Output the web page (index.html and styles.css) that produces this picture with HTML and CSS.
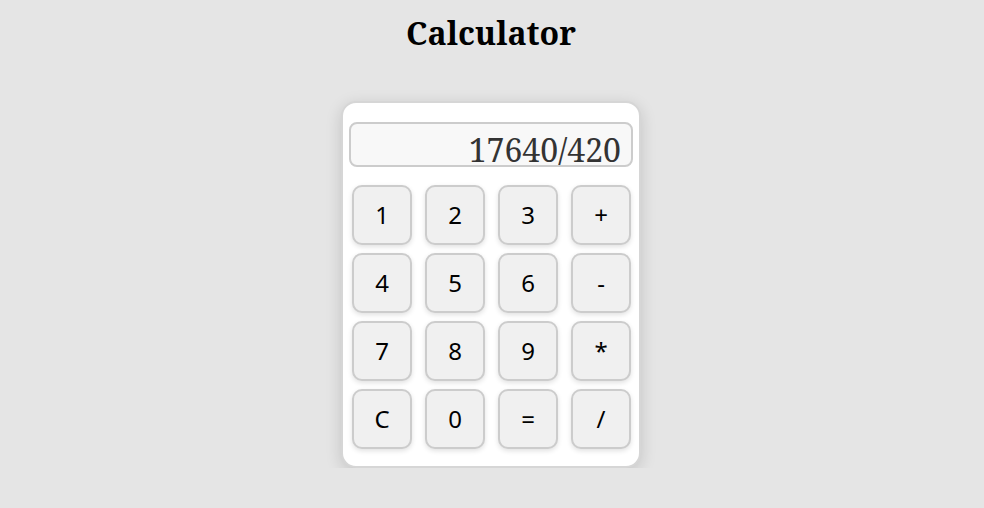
FILE: index.html
```html
<!DOCTYPE html>
<html>
<head>
<meta charset="utf-8">
<link rel="stylesheet" href="styles.css">
</head>
<body>
<h1 class="title">Calculator</h1>
<div class="calc">
  <input class="display" type="text" value="17640/420" readonly>
  <div class="keys">
    <button class="key">1</button>
    <button class="key">2</button>
    <button class="key">3</button>
    <button class="key">+</button>
    <button class="key">4</button>
    <button class="key">5</button>
    <button class="key">6</button>
    <button class="key">-</button>
    <button class="key">7</button>
    <button class="key">8</button>
    <button class="key">9</button>
    <button class="key">*</button>
    <button class="key">C</button>
    <button class="key">0</button>
    <button class="key">=</button>
    <button class="key">/</button>
  </div>
</div>
</body>
</html>
```
FILE: styles.css
```css
html, body {
  margin: 0;
  padding: 0;
  background: #e5e5e5;
}
body {
  display: flex;
  flex-direction: column;
  align-items: center;
  padding-right: 2px;
}
.title {
  font-family: "Noto Serif", "DejaVu Serif", serif;
  font-size: 32px;
  font-weight: bold;
  line-height: 44px;
  margin: 11px 0 46px;
  color: #000;
}
.calc {
  width: 284px;
  background: #fff;
  border: 2px solid #d6d6d6;
  border-radius: 15px;
  padding: 19px 6px 17px;
  box-shadow: 0 4px 16px rgba(0,0,0,0.15);
}
.display {
  display: block;
  box-sizing: border-box;
  width: 284px;
  height: 45px;
  margin: 0 0 18px;
  padding: 10px 10px 0 10px;
  border: 2px solid #cccccc;
  border-radius: 8px;
  background: #f8f8f8;
  font-family: "Noto Serif", "DejaVu Serif", serif;
  font-size: 32px;
  color: #333;
  text-align: right;
  outline: none;
}
.keys {
  display: grid;
  grid-template-columns: repeat(4, 60px);
  column-gap: 13px;
  row-gap: 8px;
  padding-left: 3px;
}
.key {
  box-sizing: border-box;
  width: 60px;
  height: 60px;
  border: 2px solid #cccccc;
  border-radius: 10px;
  background: #f0f0f0;
  font-family: "Noto Sans", "Open Sans", sans-serif;
  font-size: 24px;
  line-height: 1;
  color: #000;
  box-shadow: 0 2px 5px rgba(0,0,0,0.12);
  padding: 0;
}
```
